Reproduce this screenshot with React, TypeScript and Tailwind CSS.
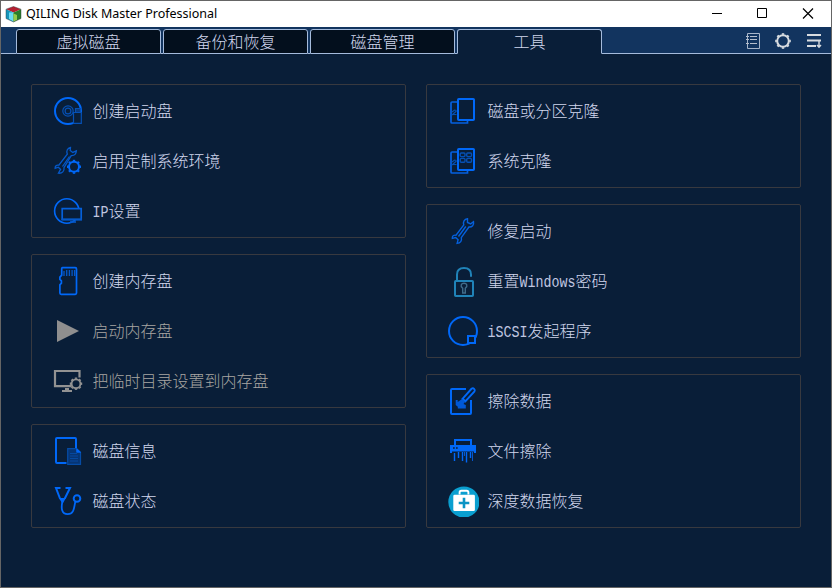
import type { ReactNode } from 'react';

import clsx from 'clsx';

interface IIconProps {
  children: ReactNode;
  color?: string;
}

interface ITool {
  label: string;
  // splits the label where half-width latin text is mixed in
  parts?: { text: string; latin?: boolean }[];
  icon: ReactNode;
  disabled?: boolean;
}

const TABS = ['虚拟磁盘', '备份和恢复', '磁盘管理', '工具'];
const ACTIVE_TAB = '工具';

const Icon = ({ children, color = '#0068f8' }: IIconProps) => (
  <svg width="32" height="32" viewBox="0 0 32 32" fill="none" stroke={color} strokeWidth="2" className="shrink-0">
    {children}
  </svg>
);

const GEAR_ANGLES = [0, 45, 90, 135, 180, 225, 270, 315];

const Gear = ({ cx, cy, r, tooth = 2 }: { cx: number; cy: number; r: number; tooth?: number }) => (
  <g>
    <circle cx={cx} cy={cy} r={r} />
    {GEAR_ANGLES.map((angle) => (
      <path
        key={angle}
        d={`M${cx} ${cy - r - 0.4}v-${tooth}`}
        strokeWidth="2.4"
        transform={`rotate(${angle} ${cx} ${cy})`}
      />
    ))}
  </g>
);

const BootDiscIcon = () => (
  <Icon>
    <circle cx="16" cy="16" r="13" />
    <g stroke="#0650b4" strokeWidth="1.2">
      <circle cx="16" cy="16" r="5.2" />
      <circle cx="16" cy="16" r="2.9" />
      <path d="M21.5 17.5h7.8v10.8h-7.8z" fill="#091e38" />
      <path d="M23.5 13.5h5v4h-5z" fill="#0a3a7c" />
    </g>
  </Icon>
);

const WrenchGearIcon = () => (
  <Icon>
    <g stroke="#0558c8" strokeWidth="1.3">
      <path d="M18.5 2.5c-3 .5-4.5 3.5-3.2 6.6L6.8 20.2c-2.4-.7-3.8 1-3.7 3.2l3.2-1.2 2.3 2.2-2.2 3.8c3.8.4 6.2-2 5.6-5.6l7.2-12c3 .2 5-1.8 5.2-4.8l-3.6 1.6-2.6-2z" />
      <path d="M17.5 11.5l-7 10" />
    </g>
    <Gear cx={22} cy={21.8} r={5} tooth={1.6} />
  </Icon>
);

const IpIcon = () => (
  <Icon>
    <circle cx="14.8" cy="16" r="12.2" strokeWidth="1.6" />
    <path d="M10.2 13.7h19v10.8h-19z" fill="#091e38" stroke="#0560da" strokeWidth="1.7" />
    <path d="M9.5 24.5h20.5" stroke="#0558c8" />
    <path d="M18 27h6" stroke="#0558c8" strokeWidth="1.6" />
  </Icon>
);

const MemoryCardIcon = () => (
  <Icon>
    <path
      d="M10.5 2.7h12.7q1.3 0 1.3 1.3v24q0 1.3-1.3 1.3h-14q-1.3 0-1.3-1.3V19.8l1.5-1.6v-2.4l-1.5-1.5v-2.2l1.8-2V4q0-1.3.8-1.3z"
      strokeWidth="1.7"
    />
    <path d="M12 6v5M14.7 5v6M17.4 5v6M20.1 5v6M22.6 5v6" stroke="#0558c8" strokeWidth="1.3" />
  </Icon>
);

const PlayIcon = () => (
  <Icon>
    <path d="M5 5l22 11L5 27z" fill="#8f8f8f" stroke="none" />
  </Icon>
);

const MonitorGearIcon = () => (
  <Icon color="#929292">
    <path d="M19.5 21.2H3V6h24.5v6.5" strokeWidth="2.2" />
    <path d="M10 26h10M13 24h4" strokeWidth="2" />
    <g strokeWidth="1.8">
      <Gear cx={24} cy={18.7} r={4.4} tooth={1.4} />
    </g>
  </Icon>
);

const DiskInfoIcon = () => (
  <Icon>
    <path d="M14.5 28H5q-1 0-1-1V4q0-1 1-1h18q1 0 1 1v9" />
    <path d="M15.7 13.7h9l3.8 3.6v12.1H15.7z" fill="#063574" stroke="#054ca6" strokeWidth="1.2" />
    <path d="M24.7 13.7v3.6h3.8z" fill="#0068f8" stroke="#0068f8" strokeWidth=".8" />
    <path d="M18 18.5h7M18 21h8M18 23.5h8M18 26h8" stroke="#0649a0" strokeWidth="1" />
  </Icon>
);

const StethoscopeIcon = () => (
  <Icon>
    <path d="M8.5 3H4l4 10.5c.8 2 4 2 4.8 0L18 3h-4.5" strokeWidth="2" />
    <path d="M7.5 13h6l-2 4.5H9.5z" fill="#0068f8" stroke="none" />
    <path d="M10.4 16.5c-1.4 6.5-1 12.6 5.3 12.6 6.6 0 6.2-6.5 7.6-12.4" strokeWidth="1.8" />
    <circle cx="25" cy="13.5" r="3.3" />
  </Icon>
);

const CloneFrame = ({ children }: { children?: ReactNode }) => (
  <Icon>
    <path d="M10 7H5q-1 0-1 1v19q0 1 1 1h15.5v-2.5" stroke="#0560e0" strokeWidth="1.7" />
    <path d="M5 20l4.5-4M5 17l2.5-2 2 .5M6 19.5h3.5" stroke="#0650b4" strokeWidth="1.1" />
    <rect x="11" y="4" width="16" height="21" rx=".8" fill="#091e38" />
    {children}
  </Icon>
);

const SystemCloneIcon = () => (
  <CloneFrame>
    <g stroke="#0650b4" strokeWidth="1.4">
      <rect x="13.2" y="8" width="4.8" height="3.6" rx="1" />
      <rect x="19.7" y="8" width="4.8" height="3.6" rx="1" />
      <rect x="13.2" y="13.4" width="4.8" height="3.8" rx="1" />
      <rect x="19.7" y="13.4" width="4.8" height="3.8" rx="1" />
    </g>
  </CloneFrame>
);

const WrenchIcon = () => (
  <Icon>
    <g stroke="#0560dc" strokeWidth="1.4">
      <path d="M20.5 3.7c-3.2.3-4.8 3.2-3.7 6.2L9 20.2c-2.4-.4-4 .6-3.7 3.2l3.4-.8 2.4 2.2-1 3.6c3.3-.2 5-2.6 4.2-5.8l7.6-10.6c3.2.3 5.3-2 4.6-5.3l-2.8 2.2-3.2-1.4z" />
      <path d="M18.8 11.5l-7.3 10" />
    </g>
  </Icon>
);

const PadlockIcon = () => (
  <Icon color="#2083b8">
    <rect x="8" y="16" width="18" height="15" rx=".8" />
    <path d="M10 15.5V9.5C10 5.2 12.6 3 17 3s7 2.2 7 6.5v2.3" />
    <path d="M15.7 28v-4.8c-3-2.8-1.3-5 1.3-5s4.3 2.2 1.3 5V28z" stroke="#406b8a" strokeWidth="1.4" />
  </Icon>
);

const IscsiIcon = () => (
  <Icon>
    <circle cx="16" cy="16" r="14" />
    <path d="M21 21h7v7h-7z" fill="#091e38" strokeWidth="2" />
  </Icon>
);

const WipeIcon = () => (
  <Icon>
    <path d="M19 4H5q-1 0-1 1v23q0 1 1 1h18q1 0 1-1V15" />
    <path d="M15.5 13.8l9-10q1.4-1.2 2.6 0t.4 2.5l-9.2 10z" strokeWidth="1.9" />
    <path d="M15 14l3 3-1.5 2 2.3 1v3.4h-8v-1.6L8.7 20v-5h2v2z" fill="#0058d6" stroke="none" />
  </Icon>
);

const ShredderIcon = () => (
  <Icon>
    <path d="M8 10V5h16v5" />
    <path d="M3 10h26v8h-2v-1.5H5V18H3z" fill="#0068f8" stroke="none" />
    <path d="M6 13h1.7M9 13h1.7" stroke="#091e38" strokeWidth="1.3" />
    <path d="M7.5 18v8M11.5 17v6M15.5 17v9M19.5 17v10.6M23.5 17v6" strokeWidth="1.4" />
    <path d="M17.5 17v4M25.5 17v9" stroke="#0556cc" strokeWidth="1" />
  </Icon>
);

const RecoveryIcon = () => (
  <Icon>
    <circle cx="16.9" cy="17" r="15.6" fill="#0a9fd0" stroke="none" />
    <path d="M12.6 9.5V7.4q0-1.7 1.7-1.7h5.4q1.7 0 1.7 1.7v2.1" stroke="#fff" strokeWidth="1.9" />
    <rect x="6.3" y="9.8" width="21.6" height="16.2" rx="1.3" fill="#fff" stroke="none" />
    <path d="M17 12.7v10.6M11.7 18h10.6" stroke="#0a94c4" strokeWidth="2.6" />
  </Icon>
);

const LEFT_GROUPS: ITool[][] = [
  [
    { label: '创建启动盘', icon: <BootDiscIcon /> },
    { label: '启用定制系统环境', icon: <WrenchGearIcon /> },
    { label: 'IP设置', parts: [{ text: 'IP', latin: true }, { text: '设置' }], icon: <IpIcon /> }
  ],
  [
    { label: '创建内存盘', icon: <MemoryCardIcon /> },
    { label: '启动内存盘', icon: <PlayIcon />, disabled: true },
    { label: '把临时目录设置到内存盘', icon: <MonitorGearIcon />, disabled: true }
  ],
  [
    { label: '磁盘信息', icon: <DiskInfoIcon /> },
    { label: '磁盘状态', icon: <StethoscopeIcon /> }
  ]
];

const RIGHT_GROUPS: ITool[][] = [
  [
    { label: '磁盘或分区克隆', icon: <CloneFrame /> },
    { label: '系统克隆', icon: <SystemCloneIcon /> }
  ],
  [
    { label: '修复启动', icon: <WrenchIcon /> },
    {
      label: '重置Windows密码',
      parts: [{ text: '重置' }, { text: 'Windows', latin: true }, { text: '密码' }],
      icon: <PadlockIcon />
    },
    { label: 'iSCSI发起程序', parts: [{ text: 'iSCSI', latin: true }, { text: '发起程序' }], icon: <IscsiIcon /> }
  ],
  [
    { label: '擦除数据', icon: <WipeIcon /> },
    { label: '文件擦除', icon: <ShredderIcon /> },
    { label: '深度数据恢复', icon: <RecoveryIcon /> }
  ]
];

const ToolGroup = ({ tools }: { tools: ITool[] }) => (
  <div className="rounded-xs border border-[#38393f] p-px">
    {tools.map((tool) => (
      <button
        key={tool.label}
        disabled={tool.disabled}
        className={clsx(
          'flex h-[50px] w-full items-center gap-2 pl-[19px] text-base leading-none',
          tool.disabled ? 'text-[#a8a6a2]' : 'text-[#d2d7ee]'
        )}
      >
        {tool.icon}
        <span className={clsx('flex items-baseline pl-[0.5px] whitespace-nowrap', !tool.parts && 'pb-0.5')}>
          {(tool.parts ?? [{ text: tool.label, latin: false }]).map((part) => (
            <span
              key={part.text}
              className={clsx(
                part.latin &&
                  "inline-block origin-[0_80%] scale-y-125 font-['Liberation_Mono','Noto_Sans_CJK_SC',monospace] text-[13.33px] text-[#c0c6e0]"
              )}
            >
              {part.text}
            </span>
          ))}
        </span>
      </button>
    ))}
  </div>
);

const TitleBar = () => (
  <div className="flex h-[26px] shrink-0 items-center bg-white pl-1 text-black">
    <svg width="17" height="18" viewBox="0 0 17 18">
      <path d="M8.5 1.5L16 4.2 8.5 7.4 1 4.2z" fill="#b51f30" />
      <path d="M1 4.2l7.5 3.2V17L1 13.5z" fill="#1595bb" />
      <path d="M4 7.5l4.5-.3v9.3L4 14z" fill="#6adcf2" />
      <path d="M16 4.2L8.5 7.4V17l7.5-3.5z" fill="#2a7d2b" />
      <path d="M8.5 8.6l3.5 1.4v5l-3.5 1.5z" fill="#93cc4b" />
      <path d="M8.5 1.5L16 4.2v9.3L8.5 17 1 13.5V4.2z" fill="none" stroke="#26343b" strokeOpacity=".55" strokeWidth=".8" />
    </svg>
    <span className="ml-1 font-['Noto_Sans','Noto_Sans_CJK_SC',sans-serif] text-[12.5px] leading-none font-normal whitespace-nowrap">
      QILING Disk Master Professional
    </span>
    <svg width="120" height="26" viewBox="711 1 120 26" fill="none" stroke="#000" className="ml-auto">
      <path d="M712 13.5h10" />
      <path d="M757.5 8.5h9v9h-9z" />
      <path d="M803 8.5l10 10M813 8.5l-10 10" strokeWidth="1.2" />
    </svg>
  </div>
);

const TabBar = () => (
  <div className="flex h-[27px] shrink-0 bg-[#12345f] pt-0.5">
    <div className="w-[15px] border-b border-[#a5bbdc]" />
    {TABS.map((tab) => (
      <div key={tab} className="flex">
        <button
          className={clsx(
            'w-[145px] rounded-t-[3px] border border-[#a5bbdc] pb-0.5 text-base leading-none text-[#d2d7ee]',
            tab === ACTIVE_TAB ? 'border-b-transparent bg-[#091e38]' : 'bg-[#030f1d]'
          )}
        >
          {tab}
        </button>
        {tab !== ACTIVE_TAB && <div className="w-0.5 border-b border-[#a5bbdc]" />}
      </div>
    ))}
    <div className="flex grow justify-end border-b border-[#a5bbdc]">
      <svg width="90" height="24" viewBox="741 29 90 24" fill="none" stroke="#d8dce0">
        <path d="M747.5 33.5h12v15h-12z" stroke="#a7b5c9" />
        <path d="M746 36.5h3M746 39.5h3M746 43.5h3M750 36.5h7M750 39.5h7M750 43.5h7" stroke="#b6bfcc" />
        <g strokeWidth="2">
          <Gear cx={783} cy={41} r={5.8} tooth={1.6} />
        </g>
        <path d="M807 35h14M807 40.5h14M807 46h9" strokeWidth="1.8" />
        <path d="M819 41v6M817 45l2 2.2 2-2.2" strokeWidth="1.4" />
      </svg>
    </div>
  </div>
);

const App = () => (
  <div className="flex h-[588px] w-[832px] flex-col border border-[#656565] bg-[#091e38] font-['Noto_Sans_CJK_SC',sans-serif] font-light">
    <TitleBar />
    <TabBar />
    <div className="flex gap-5 px-[30px] pt-[30px]">
      {[LEFT_GROUPS, RIGHT_GROUPS].map((groups, i) => (
        <div key={i} className="flex w-[375px] flex-col gap-4">
          {groups.map((tools) => (
            <ToolGroup key={tools[0].label} tools={tools} />
          ))}
        </div>
      ))}
    </div>
  </div>
);

export default App;
